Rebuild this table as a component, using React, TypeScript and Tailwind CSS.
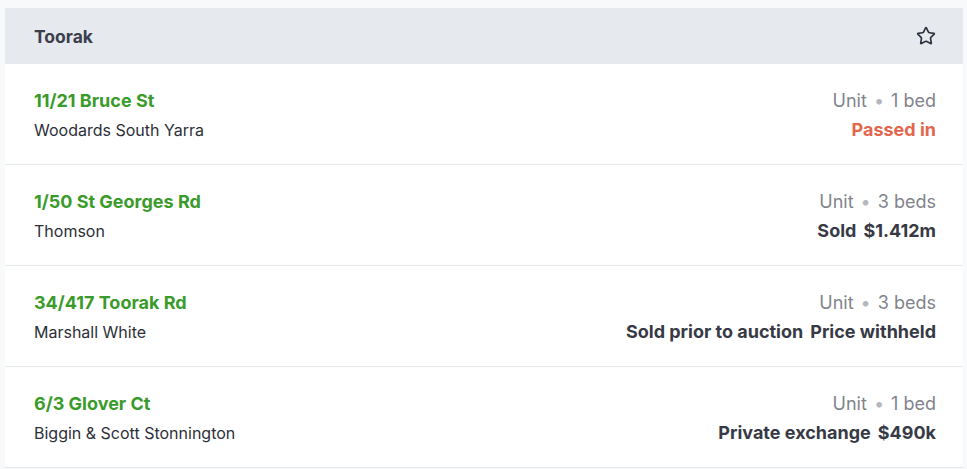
import { Star } from 'lucide-react';

type Sale = {
  address: string;
  agent: string;
  beds: string;
  result: string;
  price?: string;
  passed?: boolean;
};

const sales: Sale[] = [
  { address: '11/21 Bruce St', agent: 'Woodards South Yarra', beds: '1 bed', result: 'Passed in', passed: true },
  { address: '1/50 St Georges Rd', agent: 'Thomson', beds: '3 beds', result: 'Sold', price: '$1.412m' },
  { address: '34/417 Toorak Rd', agent: 'Marshall White', beds: '3 beds', result: 'Sold prior to auction', price: 'Price withheld' },
  { address: '6/3 Glover Ct', agent: 'Biggin & Scott Stonnington', beds: '1 bed', result: 'Private exchange', price: '$490k' },
];

const App = () => {
  return (
    <div className="min-h-screen bg-[#f7f9fb] pt-2" style={{ fontFamily: 'Inter, "Noto Sans", sans-serif' }}>
      <div className="ml-[5px] w-[958px] bg-white">
        {/* Suburb header */}
        <div className="flex h-14 items-center justify-between bg-[#e6e9ee] pt-[2px] pl-[29px] pr-[27px]">
          <h2 className="text-[17.5px] font-bold text-[#3b3f4c]">Toorak</h2>
          <Star className="-mt-[2px] h-5 w-5 text-[#2f3340]" strokeWidth={2} />
        </div>

        {/* Results */}
        {sales.map((sale) => (
          <div
            key={sale.address}
            className="flex h-[101px] items-center justify-between border-b border-[#e8eaed] pt-[3px] pl-[29px] pr-[27px]"
          >
            <div className="flex flex-col gap-px">
              <span className="text-[18px] leading-7 font-bold text-[#3a9b2b]">{sale.address}</span>
              <span className="text-[16px] leading-7 text-[#2c2f38]">{sale.agent}</span>
            </div>
            <div className="flex flex-col items-end gap-px">
              <span className="text-[18px] leading-7 text-[#80848c]">
                Unit <span className="mx-[2px] text-[#b4b7bc]">•</span> {sale.beds}
              </span>
              {sale.passed ? (
                <span className="text-[18px] leading-7 font-bold text-[#e2674d]">{sale.result}</span>
              ) : (
                <span className="flex gap-[7px] text-[18px] leading-7 font-bold text-[#373a45]">
                  <span>{sale.result}</span>
                  <span>{sale.price}</span>
                </span>
              )}
            </div>
          </div>
        ))}
      </div>
    </div>
  );
};

export default App;
